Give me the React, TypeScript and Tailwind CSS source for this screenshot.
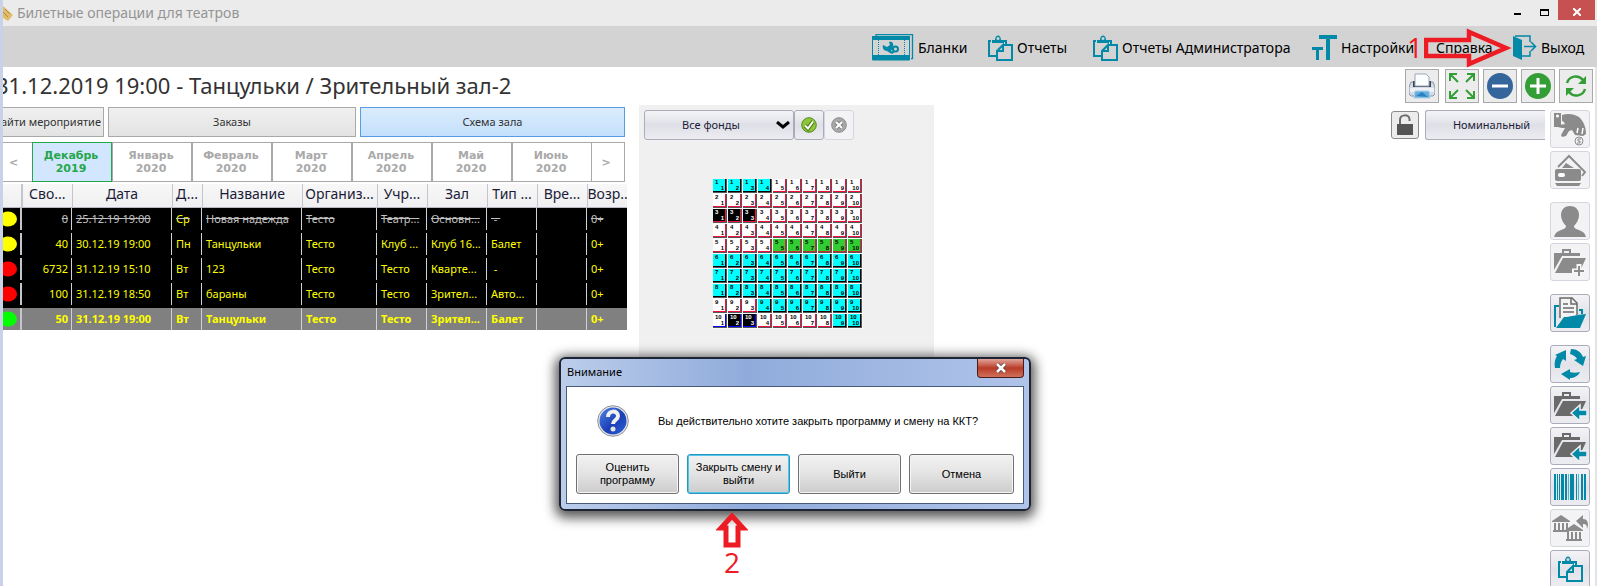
import React from 'react';
import clsx from 'clsx';

interface EventRow {
  light: string;
  free: string;
  date: string;
  day: string;
  title: string;
  org: string;
  venue: string;
  hall: string;
  kind: string;
  age: string;
  state?: 'past' | 'selected';
}

const events: EventRow[] = [
  { light: '#ffff00', free: '0', date: '25.12.19 19:00', day: 'Ср', title: 'Новая надежда', org: 'Тесто', venue: 'Театр...', hall: 'Основн...', kind: ' - ', age: '0+', state: 'past' },
  { light: '#ffff00', free: '40', date: '30.12.19 19:00', day: 'Пн', title: 'Танцульки', org: 'Тесто', venue: 'Клуб ...', hall: 'Клуб 16...', kind: 'Балет', age: '0+' },
  { light: '#ff0000', free: '6732', date: '31.12.19 15:10', day: 'Вт', title: '123', org: 'Тесто', venue: 'Тесто', hall: 'Кварте...', kind: ' -', age: '0+' },
  { light: '#ff0000', free: '100', date: '31.12.19 18:50', day: 'Вт', title: 'бараны', org: 'Тесто', venue: 'Тесто', hall: 'Зрител...', kind: 'Авто...', age: '0+' },
  { light: '#00ff00', free: '50', date: '31.12.19 19:00', day: 'Вт', title: 'Танцульки', org: 'Тесто', venue: 'Тесто', hall: 'Зрител...', kind: 'Балет', age: '0+', state: 'selected' },
];

const columns = [
  { label: '', width: 'w-[19px]' },
  { label: 'Сво...', width: 'w-[50px]' },
  { label: 'Дата', width: 'w-[100px]' },
  { label: 'Д...', width: 'w-[30px]' },
  { label: 'Название', width: 'w-[100px]' },
  { label: 'Организ...', width: 'w-[75px]' },
  { label: 'Учр...', width: 'w-[50px]' },
  { label: 'Зал', width: 'w-[60px]' },
  { label: 'Тип ...', width: 'w-[50px]' },
  { label: 'Вре...', width: 'w-[50px]' },
  { label: 'Возр..', width: 'w-[40px]' },
];

const months = [
  ['Декабрь', '2019'],
  ['Январь', '2020'],
  ['Февраль', '2020'],
  ['Март', '2020'],
  ['Апрель', '2020'],
  ['Май', '2020'],
  ['Июнь', '2020'],
];

// one letter per seat, see seatStyles
const hallRows = [
  'ccccwwwwww',
  'wwwwwwwwww',
  'kkkwwwwwww',
  'wwwwwwwwww',
  'wwwwgggggg',
  'cccccccccc',
  'cccccccccc',
  'cccccccccc',
  'wwwccccccc',
  'bBBwwwwwcc',
];

const seatStyles: Record<string, string> = {
  c: 'bg-[#00ffff] border-black',
  w: 'bg-white border-[#f0103c]',
  k: 'bg-black border-[#f0103c]',
  g: 'bg-[#32cd32] border-[#c03030]',
  b: 'bg-white border-[#0000ff]',
  B: 'bg-black border-[#0000ff]',
};

const TEAL = '#0389a8';

const ClipboardIcon: React.FC<{ className?: string }> = ({ className }) => (
  <svg width="25" height="26" viewBox="0 0 25 26" className={className} fill="none" stroke={TEAL} strokeWidth="2">
    <path d="M3 6H1v15h8M16 6h2v4" />
    <path d="M4 8V5h3c0-6 6-6 6 0h3v3z" fill={TEAL} stroke="none" />
    <circle cx="10" cy="3.6" r="1.5" fill="#d3d3d3" stroke="none" />
    <path d="M15 10h9v15H9v-9l6-6v6H9" />
  </svg>
);

const BlankIcon = () => (
  <svg width="42" height="27" viewBox="0 0 42 27">
    <path d="M4 2V.7h36.500v24H39" fill="none" stroke={TEAL} strokeWidth="1.300" />
    <path d="M.5 3h37v23H.5z" fill="none" stroke={TEAL} />
    <path d="M0 2h38v4H0zM0 21h38v5H0z" fill={TEAL} />
    <path d="M6.500 6v15M32.500 6v15" stroke={TEAL} strokeDasharray="1 1" />
    <path d="M11 11l4 2 3-2-1-3c3-1 5 1 4 5l-2 3 2 4-3-1-3-2c-3 0-5-3-4-6z" fill={TEAL} />
    <circle cx="23.500" cy="15" r="2.500" fill="none" stroke={TEAL} strokeWidth="2" />
    <path d="M18 15h3M20 19l2-2" stroke={TEAL} strokeWidth="2" />
  </svg>
);

const FontIcon = () => (
  <svg width="25" height="26" viewBox="0 0 25 26" fill={TEAL}>
    <path d="M7 0h18v4h-7v21h-4V4H7zM0 12h11v3H7v10H4V15H0z" />
  </svg>
);

const ExitIcon = () => (
  <svg width="24" height="26" viewBox="0 0 24 26">
    <path d="M0 1l9 4v20l-9-4z" fill={TEAL} />
    <path d="M2 1h15v6M17 16v5H9" fill="none" stroke={TEAL} strokeWidth="1.500" />
    <path d="M11 11.500h11M18 7l4.500 4.500L18 16" fill="none" stroke={TEAL} strokeWidth="1.600" />
  </svg>
);

const menu = [
  { label: 'Бланки', icon: <BlankIcon />, width: 'w-[92px]' },
  { label: 'Отчеты', icon: <ClipboardIcon />, width: 'w-[81px]' },
  { label: 'Отчеты Администратора', icon: <ClipboardIcon />, width: 'w-[195px]' },
  { label: 'Настройки', icon: <FontIcon />, width: 'w-[100px]' },
  { label: 'Справка', icon: null, width: 'w-[53px]' },
  { label: 'Выход', icon: <ExitIcon />, width: 'w-[70px]' },
];

const PrinterIcon = () => (
  <svg width="26" height="26" viewBox="0 0 26 26">
    <path d="M2 9h3v3h16V9h3l2 5v7l-2 2H2l-2-2v-7z" fill="#d5dbe4" stroke="#8996a8" />
    <path d="M4 8h18v6H4z" fill="#3b4654" />
    <path d="M6 1h11l3 3v9H6z" fill="#fbfdff" stroke="#9aa7b8" />
    <path d="M1 15h24v4H1z" fill="#eef1f6" />
    <path d="M6 18h14l1 7H5z" fill="#5fb0e2" stroke="#b4cfe4" />
    <path d="M7 23l6-4 6 5z" fill="#2f7fc0" />
  </svg>
);

const ExpandIcon = () => (
  <svg width="28" height="28" viewBox="0 0 28 28" fill="none" stroke="#339e35" strokeWidth="2">
    <path d="M2 9V2h7M2 2l8 8M19 2h7v7M26 2l-8 8M2 19v7h7M2 26l8-8M26 19v7h-7M26 26l-8-8" />
  </svg>
);

const RoundIcon: React.FC<{ color: string; plus?: boolean }> = ({ color, plus }) => (
  <svg width="28" height="28" viewBox="0 0 28 28">
    <circle cx="14" cy="14" r="13" fill={color} />
    <path d={plus ? 'M6 14h16M14 6v16' : 'M6 14h16'} stroke="#fff" strokeWidth="3" />
  </svg>
);

const RefreshIcon = () => (
  <svg width="22" height="24" viewBox="0 0 22 24" fill="none" stroke="#339e35" strokeWidth="2.500">
    <path d="M2 9c2-7 11-9 16-3M20 15c-2 7-11 9-16 3" />
    <path d="M21 2v8h-8zM1 22v-8h8z" fill="#339e35" stroke="none" />
  </svg>
);

const LockIcon = () => (
  <svg width="18" height="22" viewBox="0 0 18 22">
    <path d="M4 11V6c0-6 9-6 9.500-1v2" fill="none" stroke="#6b6b6b" strokeWidth="2" />
    <path d="M1 10h16v11H1z" fill="#555" />
  </svg>
);

const FolderIcon: React.FC<{ color: string; children?: React.ReactNode }> = ({ color, children }) => (
  <svg width="34" height="34" viewBox="0 0 34 34">
    <path d="M10 8V5h7v3" fill="none" stroke={color} strokeWidth="2" />
    <path d="M1 8h26v3H9L1 25z" fill={color} />
    <path d="M10 13h23l-7 15H2z" fill={color} />
    {children}
  </svg>
);

const FolderBackIcon = () => (
  <FolderIcon color="#6a6a6a">
    <path d="M18 25l9-8v5h7v6h-7v5z" fill={TEAL} stroke="#f1f1f4" strokeWidth="1.500" />
  </FolderIcon>
);

const bank = 'M0 6l9-6 9 6v1H0zM2 8h2v7H2zM6 8h2v7H6zM10 8h2v7h-2zM14 8h2v7h-2zM1 15h16v2H1z';

const sideGroups = [
  [
    {
      name: 'Оплата',
      muted: true,
      icon: (
        <svg width="34" height="34" viewBox="0 0 34 34" fill="#8b8b8b">
          <path d="M1 1h7v14H1z" />
          <circle cx="4.500" cy="4" r="1.500" fill="#fff" />
          <path d="M9 3c6-2 12-1 17 2 4 4 7 9 7 17l-3 2-8-1-3-5-3 1-3 5-4 1-1-2 4-7c-3 0-6 0-8-2 2-2 6-1 8-2-1-2-2-3-3-3z" />
          <path d="M24 21l1-5M29 22l1-6" stroke="#fff" strokeWidth="1.500" />
          <circle cx="26" cy="29" r="4" fill="none" stroke="#8b8b8b" />
          <path d="M28 27h-3v2h2v2h-3" fill="none" stroke="#8b8b8b" />
        </svg>
      ),
    },
    {
      name: 'Карты',
      muted: true,
      icon: (
        <svg width="34" height="34" viewBox="0 0 34 34" fill="#8b8b8b">
          <path d="M5 14L16 3l16 16-3 4" fill="none" stroke="#8b8b8b" strokeWidth="2" />
          <path d="M9 15l4-5 8 5z" />
          <rect x="2" y="16" width="26" height="12" rx="2" />
          <rect x="5" y="20" width="7" height="4" rx="2" fill="#fff" />
          <path d="M2 30h26l-2 3H4z" />
        </svg>
      ),
    },
  ],
  [
    {
      name: 'Клиент',
      muted: true,
      icon: (
        <svg width="34" height="34" viewBox="0 0 34 34" fill="#8b8b8b">
          <path d="M17 2c6 0 9 4 9 9 0 4-2 8-5 11 0 3 3 3 7 5 3 1 4 3 5 6H1c1-3 2-5 5-6 4-2 7-2 7-5-3-3-5-7-5-11 0-5 3-9 9-9z" />
        </svg>
      ),
    },
    {
      name: 'Новый заказ',
      muted: true,
      icon: (
        <FolderIcon color="#8b8b8b">
          <path d="M26 19v13M19 26h14" stroke="#f6f6f8" strokeWidth="5" />
          <path d="M26 21v10M21 26h10" stroke="#8b8b8b" strokeWidth="2" />
        </FolderIcon>
      ),
    },
  ],
  [
    {
      name: 'Открыть заказ',
      icon: (
        <svg width="34" height="34" viewBox="0 0 34 34">
          <path d="M2 31V10h4M26 14h3v4" fill="none" stroke={TEAL} strokeWidth="2" />
          <path d="M7 22V2h12l5 5v12" fill="#f4f4f4" stroke="#6a6a6a" strokeWidth="1.500" />
          <path d="M18 2v6h6M10 8h5M10 12h11M10 16h11" fill="none" stroke="#6a6a6a" strokeWidth="1.500" />
          <path d="M11 21c7 0 9-2 22-3l-6 14H3z" fill={TEAL} />
        </svg>
      ),
    },
  ],
  [
    {
      name: 'Обновить',
      icon: (
        <svg width="34" height="34" viewBox="0 0 34 34" fill={TEAL}>
          <path d="M2 21c-1-5 0-9 2-12L2 8l11-5v11l-3-2c-2 3-3 5-3 9z" />
          <path d="M18 2c6 0 10 3 12 8l3-1-3 10-9-6 3-1c-1-2-3-4-7-5z" />
          <path d="M27 25c-2 4-6 6-10 6v2l-9-6 9-5v3c3 1 6 1 10 0z" />
        </svg>
      ),
    },
    { name: 'Возврат заказа', icon: <FolderBackIcon /> },
    { name: 'Возврат билета', icon: <FolderBackIcon /> },
    {
      name: 'Штрихкод',
      icon: (
        <svg width="34" height="28" viewBox="0 0 34 28" fill={TEAL}>
          <path d="M1 1h2v26H1zM4 1h1v26H4zM6 1h1v26H6zM8 1h3v26H8zM12 1h2v26h-2zM17 1h4v26h-4zM23 1h1v26h-1zM28 1h2v26h-2zM31 1h2v26h-2z" />
          <path d="M15 1h1v26h-1zM25 1h1v26h-1z" opacity=".6" />
        </svg>
      ),
    },
    {
      name: 'Возврат в банк',
      muted: true,
      icon: (
        <svg width="38" height="34" viewBox="0 0 38 34" fill="#8b8b8b">
          <path d={bank} transform="translate(1 4)" />
          <path d={bank} transform="translate(14 13)" />
          <path d="M25 10l7-6v4c5 0 6 5 4 10 0-4-1-5-4-5v4z" />
        </svg>
      ),
    },
    { name: 'Отчет', icon: <ClipboardIcon /> },
  ],
];

const TitleBar = () => (
  <header className="flex h-[26px] items-center bg-[#ebebeb]">
    <svg width="10" height="18" viewBox="0 0 10 18">
      <path d="M0 2l10 9-5 6-5-3z" fill="#e0bd6b" />
      <path d="M0 8l5 5M2 5l5 5" stroke="#b48a3c" />
    </svg>
    <span className="ml-1 flex-1 text-[14px] leading-5 text-[#949494]">Билетные операции для театров</span>
    <div className="flex h-full items-start">
      <button aria-label="Свернуть" className="flex h-5 w-[27px] items-center justify-center">
        <span className="mt-2 h-[2px] w-[7px] bg-black" />
      </button>
      <button aria-label="Развернуть" className="flex h-6 w-[27px] items-center justify-center">
        <span className="h-[7px] w-[9px] border border-t-2 border-black" />
      </button>
      <button aria-label="Закрыть" className="mr-[2px] flex h-5 w-[37px] items-center justify-center bg-[#c75050]">
        <svg width="8" height="8" viewBox="0 0 8 8" className="mt-[3px]" stroke="#fff" strokeWidth="2">
          <path d="M0 0l8 8M8 0L0 8" />
        </svg>
      </button>
    </div>
  </header>
);

const MenuBar = () => (
  <nav className="flex h-[41px] items-center justify-end gap-6 bg-[#d3d3d3] pr-[14px] pt-[2px]">
    {menu.map((item) => (
      <button key={item.label} className={clsx('flex shrink-0 items-center gap-1 whitespace-nowrap text-[14px] leading-5 text-black', item.width)}>
        {item.icon && <span className="shrink-0">{item.icon}</span>}
        {item.label}
      </button>
    ))}
  </nav>
);

const tools = [
  { name: 'Печать', icon: <PrinterIcon /> },
  { name: 'Во весь экран', icon: <ExpandIcon /> },
  { name: 'Уменьшить', icon: <RoundIcon color="#34659b" /> },
  { name: 'Увеличить', icon: <RoundIcon color="#339e35" plus /> },
  { name: 'Обновить', icon: <RefreshIcon /> },
];

const EventsTable = () => (
  <table className="mt-[2px] w-full table-fixed border-collapse">
    <thead>
      <tr className="h-[23px] border-b border-[#b9b9c3] bg-linear-to-b from-[#f8f8f8] to-[#efeff1]">
        {columns.map((col, i) => (
          <th
            key={i}
            className={clsx(
              'overflow-hidden whitespace-nowrap p-0 pb-[3px] text-center text-[14px] font-normal leading-5 text-[#1c1c38]',
              col.width,
              i === 0 ? 'border-r-2 border-[#c5c5cf]' : i < 10 && 'border-r border-[#c5c5cf]',
            )}
          >
            {col.label}
          </th>
        ))}
      </tr>
    </thead>
    <tbody>
      {events.map((ev, row) => {
        const cells = [ev.free, ev.date, ev.day, ev.title, ev.org, ev.venue, ev.hall, ev.kind, '', ev.age];
        const selected = ev.state === 'selected';
        return (
          <tr
            key={row}
            className={clsx(
              'text-[11px] leading-[22px]',
              selected ? 'bg-[#808080] font-bold' : 'bg-black',
              ev.state === 'past' ? 'text-[#c0c0c0] line-through' : 'text-[#ffff00]',
            )}
          >
            <td className={clsx('p-0', !selected && 'pb-[3px]')}>
              <div className="flex h-[22px] items-center border-r-2 border-[#c5c5cf]">
                <svg width="14" height="16" viewBox="3 0 14 16">
                  <ellipse cx="8" cy="8" rx="9" ry="7.500" fill={ev.light} />
                </svg>
              </div>
            </td>
            {cells.map((cell, i) => (
              <td key={i} className={clsx('overflow-hidden p-0', !selected && 'pb-[3px]')}>
                <div
                  className={clsx(
                    'h-[22px] whitespace-pre pl-1 pr-[3px]',
                    i < 9 && 'border-r border-[#d0d0d8]',
                    i === 0 && 'text-right',
                    i === 2 && 'text-[#ffff00]',
                  )}
                >
                  {cell}
                </div>
              </td>
            ))}
          </tr>
        );
      })}
    </tbody>
  </table>
);

const tabClass = 'h-[30px] border text-[11px] leading-4 text-[#333] overflow-hidden whitespace-nowrap';

const Schedule = () => (
  <section className="w-[624px] shrink-0 pt-1">
    <div className="flex gap-1 pr-[2px]">
      <button className={clsx(tabClass, 'flex w-[101px] justify-end border-l-0 border-[#a9a9a9] bg-linear-to-b from-[#f0f0f0] to-[#e3e3e3] pr-[2px] pt-[6px]')}>
        Найти мероприятие
      </button>
      <button className={clsx(tabClass, 'w-[248px] border-[#a9a9a9] bg-linear-to-b from-[#f0f0f0] to-[#e3e3e3]')}>Заказы</button>
      <button className={clsx(tabClass, 'flex-1 border-[#569de5] bg-linear-to-b from-[#daecfc] to-[#c4e0fc]')}>Схема зала</button>
    </div>
    <div className="mt-[5px] flex h-10 pr-[2px] font-['DejaVu_Sans',sans-serif] text-[11px] font-bold leading-[13px] text-[#a9a9a9]">
      <button className="w-[29px] border-y border-[#a9a9a9] pr-2">&lt;</button>
      {months.map(([name, year], i) => (
        <button
          key={name}
          className={clsx('w-20 border pr-[2px]', i === 0 ? 'border-[#26a64a] bg-[#d3e6ff] text-[#26a64a]' : 'border-[#a9a9a9]')}
        >
          {name}
          <br />
          {year}
        </button>
      ))}
      <button className="flex-1 border border-l-0 border-[#a9a9a9] pr-1">&gt;</button>
    </div>
    <EventsTable />
  </section>
);

const softButton = 'flex items-center justify-center rounded-[3px] border border-[#a9adbb] bg-linear-to-b from-[#f4f4f7] via-[#dfe0e7] to-[#ececf1]';

const Hall = () => (
  <section className="h-[380px] w-[295px] shrink-0 bg-[#f0f0f0] px-[5px] pt-[5px]">
    <div className="flex">
      <div className="relative w-[150px]">
        <select
          aria-label="Фонд"
          defaultValue="all"
          className="h-[30px] w-full appearance-none rounded-[3px] border border-[#a9adbb] bg-linear-to-b from-[#f4f4f7] via-[#dfe0e7] to-[#ececf1] pr-4 text-[11px] text-[#1c1c38] [text-align-last:center]"
        >
          <option value="all">Все фонды</option>
        </select>
        <svg width="14" height="8" viewBox="0 0 14 8" className="pointer-events-none absolute right-1 top-[11px]" fill="none" stroke="#000" strokeWidth="3">
          <path d="M1 1l6 5 6-5" />
        </svg>
      </div>
      <button aria-label="Применить" className={clsx(softButton, 'h-[30px] w-[30px]')}>
        <svg width="16" height="16" viewBox="0 0 16 16">
          <circle cx="8" cy="8" r="7.300" fill="#8cc63a" stroke="#5a8a1e" />
          <path d="M4 8.500l3 3 5-7" fill="none" stroke="#4c7a18" strokeWidth="4" />
          <path d="M4 8.500l3 3 5-7" fill="none" stroke="#fff" strokeWidth="2" />
        </svg>
      </button>
      <button aria-label="Сбросить" className="flex h-[30px] w-[30px] items-center justify-center rounded-[3px] border border-[#d5d6dd] bg-[#f3f3f6]">
        <svg width="16" height="16" viewBox="0 0 16 16">
          <circle cx="8" cy="8" r="7.300" fill="#a9a9a9" stroke="#8b8b8b" />
          <path d="M5 5l6 6M11 5l-6 6" stroke="#808080" strokeWidth="4" />
          <path d="M5 5l6 6M11 5l-6 6" stroke="#fff" strokeWidth="2" />
        </svg>
      </button>
    </div>
    <div className="ml-[69px] mt-[39px] grid w-[150px] grid-cols-10 bg-[#f8f8f8] font-['Liberation_Sans',sans-serif] text-[6px] font-bold leading-[6px]">
      {hallRows.map((row, r) =>
        row.split('').map((seat, s) => (
          <button key={`${r}-${s}`} className="h-[15px] border-b border-r border-[#f8f8f8]">
            <span className="block h-[14px] border-b border-r border-[#555]">
              <span
                className={clsx(
                  'flex h-[13px] flex-col border-b border-r',
                  seatStyles[seat],
                  seat === 'k' || seat === 'B' ? 'text-white' : 'text-black',
                )}
              >
                <span className="pl-[2px] text-left">{r + 1}</span>
                <span className="pr-px text-right">{s + 1}</span>
              </span>
            </span>
          </button>
        )),
      )}
    </div>
  </section>
);

const SidePanel = () => (
  <aside className="flex w-[47px] flex-col gap-[13px] border-r-2 border-[#e4e4e4] pt-[7px]">
    {sideGroups.map((group, g) => (
      <div key={g} className="flex flex-col gap-[3px]">
        {group.map((item) => (
          <button
            key={item.name}
            aria-label={item.name}
            className={clsx(
              'flex h-[38px] w-10 items-center justify-center rounded-[3px] border',
              item.muted ? 'border-[#d5d6dd] bg-[#f3f3f6]' : 'border-[#a9adbb] bg-linear-to-b from-[#f4f4f7] via-[#e2e3e9] to-[#ececf1]',
            )}
          >
            {item.icon}
          </button>
        ))}
      </div>
    ))}
  </aside>
);

const dialogButtons = ['Оценить программу', 'Закрыть смену и выйти', 'Выйти', 'Отмена'];

const CloseDialog = () => (
  <div
    role="dialog"
    aria-labelledby="dialog-title"
    className="absolute left-[559px] top-[357px] w-[472px] rounded-[6px] border-2 border-[#1d2433] bg-linear-to-r from-[#bccdeb] via-[#90abdb] via-40% to-[#b0c4e9] px-[5px] pb-[5px] font-['Liberation_Sans',sans-serif] text-[11px] shadow-[0_3px_12px_4px_rgba(0,0,0,0.65)]"
  >
    <div className="flex h-[27px] items-start justify-between">
      <h2 id="dialog-title" className="pl-px pt-1 font-['Noto_Sans',sans-serif] text-[11px] leading-[18px] text-black">Внимание</h2>
      <button
        aria-label="Закрыть"
        className="flex h-[19px] w-[47px] items-center justify-center rounded-b-[4px] border border-t-0 border-[#4b1c1c] bg-linear-to-b from-[#dfa49b] via-[#b83a27] to-[#d0705a]"
      >
        <svg width="12" height="10" viewBox="0 0 12 10">
          <path d="M2 1l8 8M10 1L2 9" stroke="#5a3a3a" strokeWidth="4" />
          <path d="M2 1l8 8M10 1L2 9" stroke="#fff" strokeWidth="2.500" />
        </svg>
      </button>
    </div>
    <div className="border border-[#4a5a7d] bg-white px-[9px] pb-[9px] pt-[18px] text-black">
      <div className="flex items-center pl-[21px]">
        <svg width="32" height="32" viewBox="0 0 32 32">
          <defs>
            <linearGradient id="question" x1="0" y1="0" x2="1" y2="1">
              <stop offset="0" stopColor="#4f86e8" />
              <stop offset=".55" stopColor="#1b3fb4" />
              <stop offset="1" stopColor="#2a62d8" />
            </linearGradient>
          </defs>
          <circle cx="16" cy="16" r="15.300" fill="#e6e6ea" stroke="#8e8e96" />
          <circle cx="16" cy="16" r="13.500" fill="url(#question)" />
          <path d="M11 12c0-7 10-7 10-1 0 4-5 4-5 8" fill="none" stroke="#f1f1f1" strokeWidth="4" />
          <circle cx="16" cy="24" r="2.500" fill="#e4e4e4" />
        </svg>
        <p className="ml-[29px] whitespace-nowrap leading-4">Вы действительно хотите закрыть программу и смену на ККТ?</p>
      </div>
      <div className="mt-[17px] grid grid-cols-[103px_103px_103px_1fr] gap-2">
        {dialogButtons.map((label, i) => (
          <button
            key={label}
            className={clsx(
              'h-10 rounded-[3px] border bg-linear-to-b from-[#f2f2f2] from-0% via-[#e3e3e3] via-50% to-[#cccccc] px-1 leading-[13px]',
              i === 1 ? 'border-[#2c93bd] ring-1 ring-inset ring-[#4fc8ee]' : 'border-[#707070] ring-1 ring-inset ring-[#f6f6f6]',
            )}
          >
            {label}
          </button>
        ))}
      </div>
    </div>
  </div>
);

// numbered red arrows: first "Выход", then the dialog button
const Hints = () => (
  <div className="pointer-events-none font-['Open_Sans',sans-serif] text-[28px] leading-8 text-[#ed1c24]">
    <span className="absolute right-[174px] top-[31px]">1</span>
    <svg width="88" height="40" viewBox="0 0 88 40" className="absolute right-[85px] top-7" fill="none" stroke="#ed1c24" strokeWidth="4.500">
      <path d="M2 12h43V4l37 16-37 16v-8H2z" />
    </svg>
    <svg width="32" height="36" viewBox="0 0 32 36" className="absolute left-[716px] top-[512px]" fill="none" stroke="#ed1c24" strokeWidth="5">
      <path d="M16 4l11 12h-5v17H10V16H5z" />
    </svg>
    <span className="absolute left-[724px] top-[546px]">2</span>
  </div>
);

export default function App() {
  return (
    <div className="relative flex h-screen overflow-hidden bg-white font-['Noto_Sans',sans-serif]">
      <div className="w-[3px] shrink-0 bg-[#c9d3e8]" />
      <div className="flex min-w-0 flex-1 flex-col">
        <TitleBar />
        <MenuBar />
        <main className="flex min-h-0 flex-1 flex-col">
          <div className="flex h-9 shrink-0 items-center justify-between border-r-2 border-[#e4e4e4] pr-[2px]">
            <h1 className="flex-1 overflow-hidden whitespace-nowrap -indent-[7px] text-[22px] leading-8 text-[#333]">
              31.12.2019 19:00 - Танцульки / Зрительный зал-2
            </h1>
            <div className="flex gap-1 pt-[2px]">
              {tools.map((tool, i) => (
                <button
                  key={tool.name}
                  aria-label={tool.name}
                  className={clsx('flex h-[34px] w-[34px] items-center justify-center border border-[#a9a9a9] bg-[#ececec]', i === 0 && 'mr-[2px]')}
                >
                  {tool.icon}
                </button>
              ))}
            </div>
          </div>
          <div className="flex min-h-0 flex-1">
            <Schedule />
            <div className="ml-3 flex-none pt-[2px]">
              <Hall />
            </div>
            <div className="flex flex-1 items-start justify-end gap-[6px] pr-[5px] pt-[7px]">
              <button aria-label="Замок" className="mt-px flex h-7 w-7 items-center justify-center rounded-[3px] border border-[#8b8b8b] bg-[#ececec]">
                <LockIcon />
              </button>
              <button className={clsx(softButton, 'h-[30px] w-[120px] rounded-r-none border-r-0 text-[11px] text-[#1c1c38]')}>
                <span className="pl-3">Номинальный</span>
              </button>
            </div>
            <SidePanel />
          </div>
        </main>
      </div>
      <CloseDialog />
      <Hints />
    </div>
  );
}
